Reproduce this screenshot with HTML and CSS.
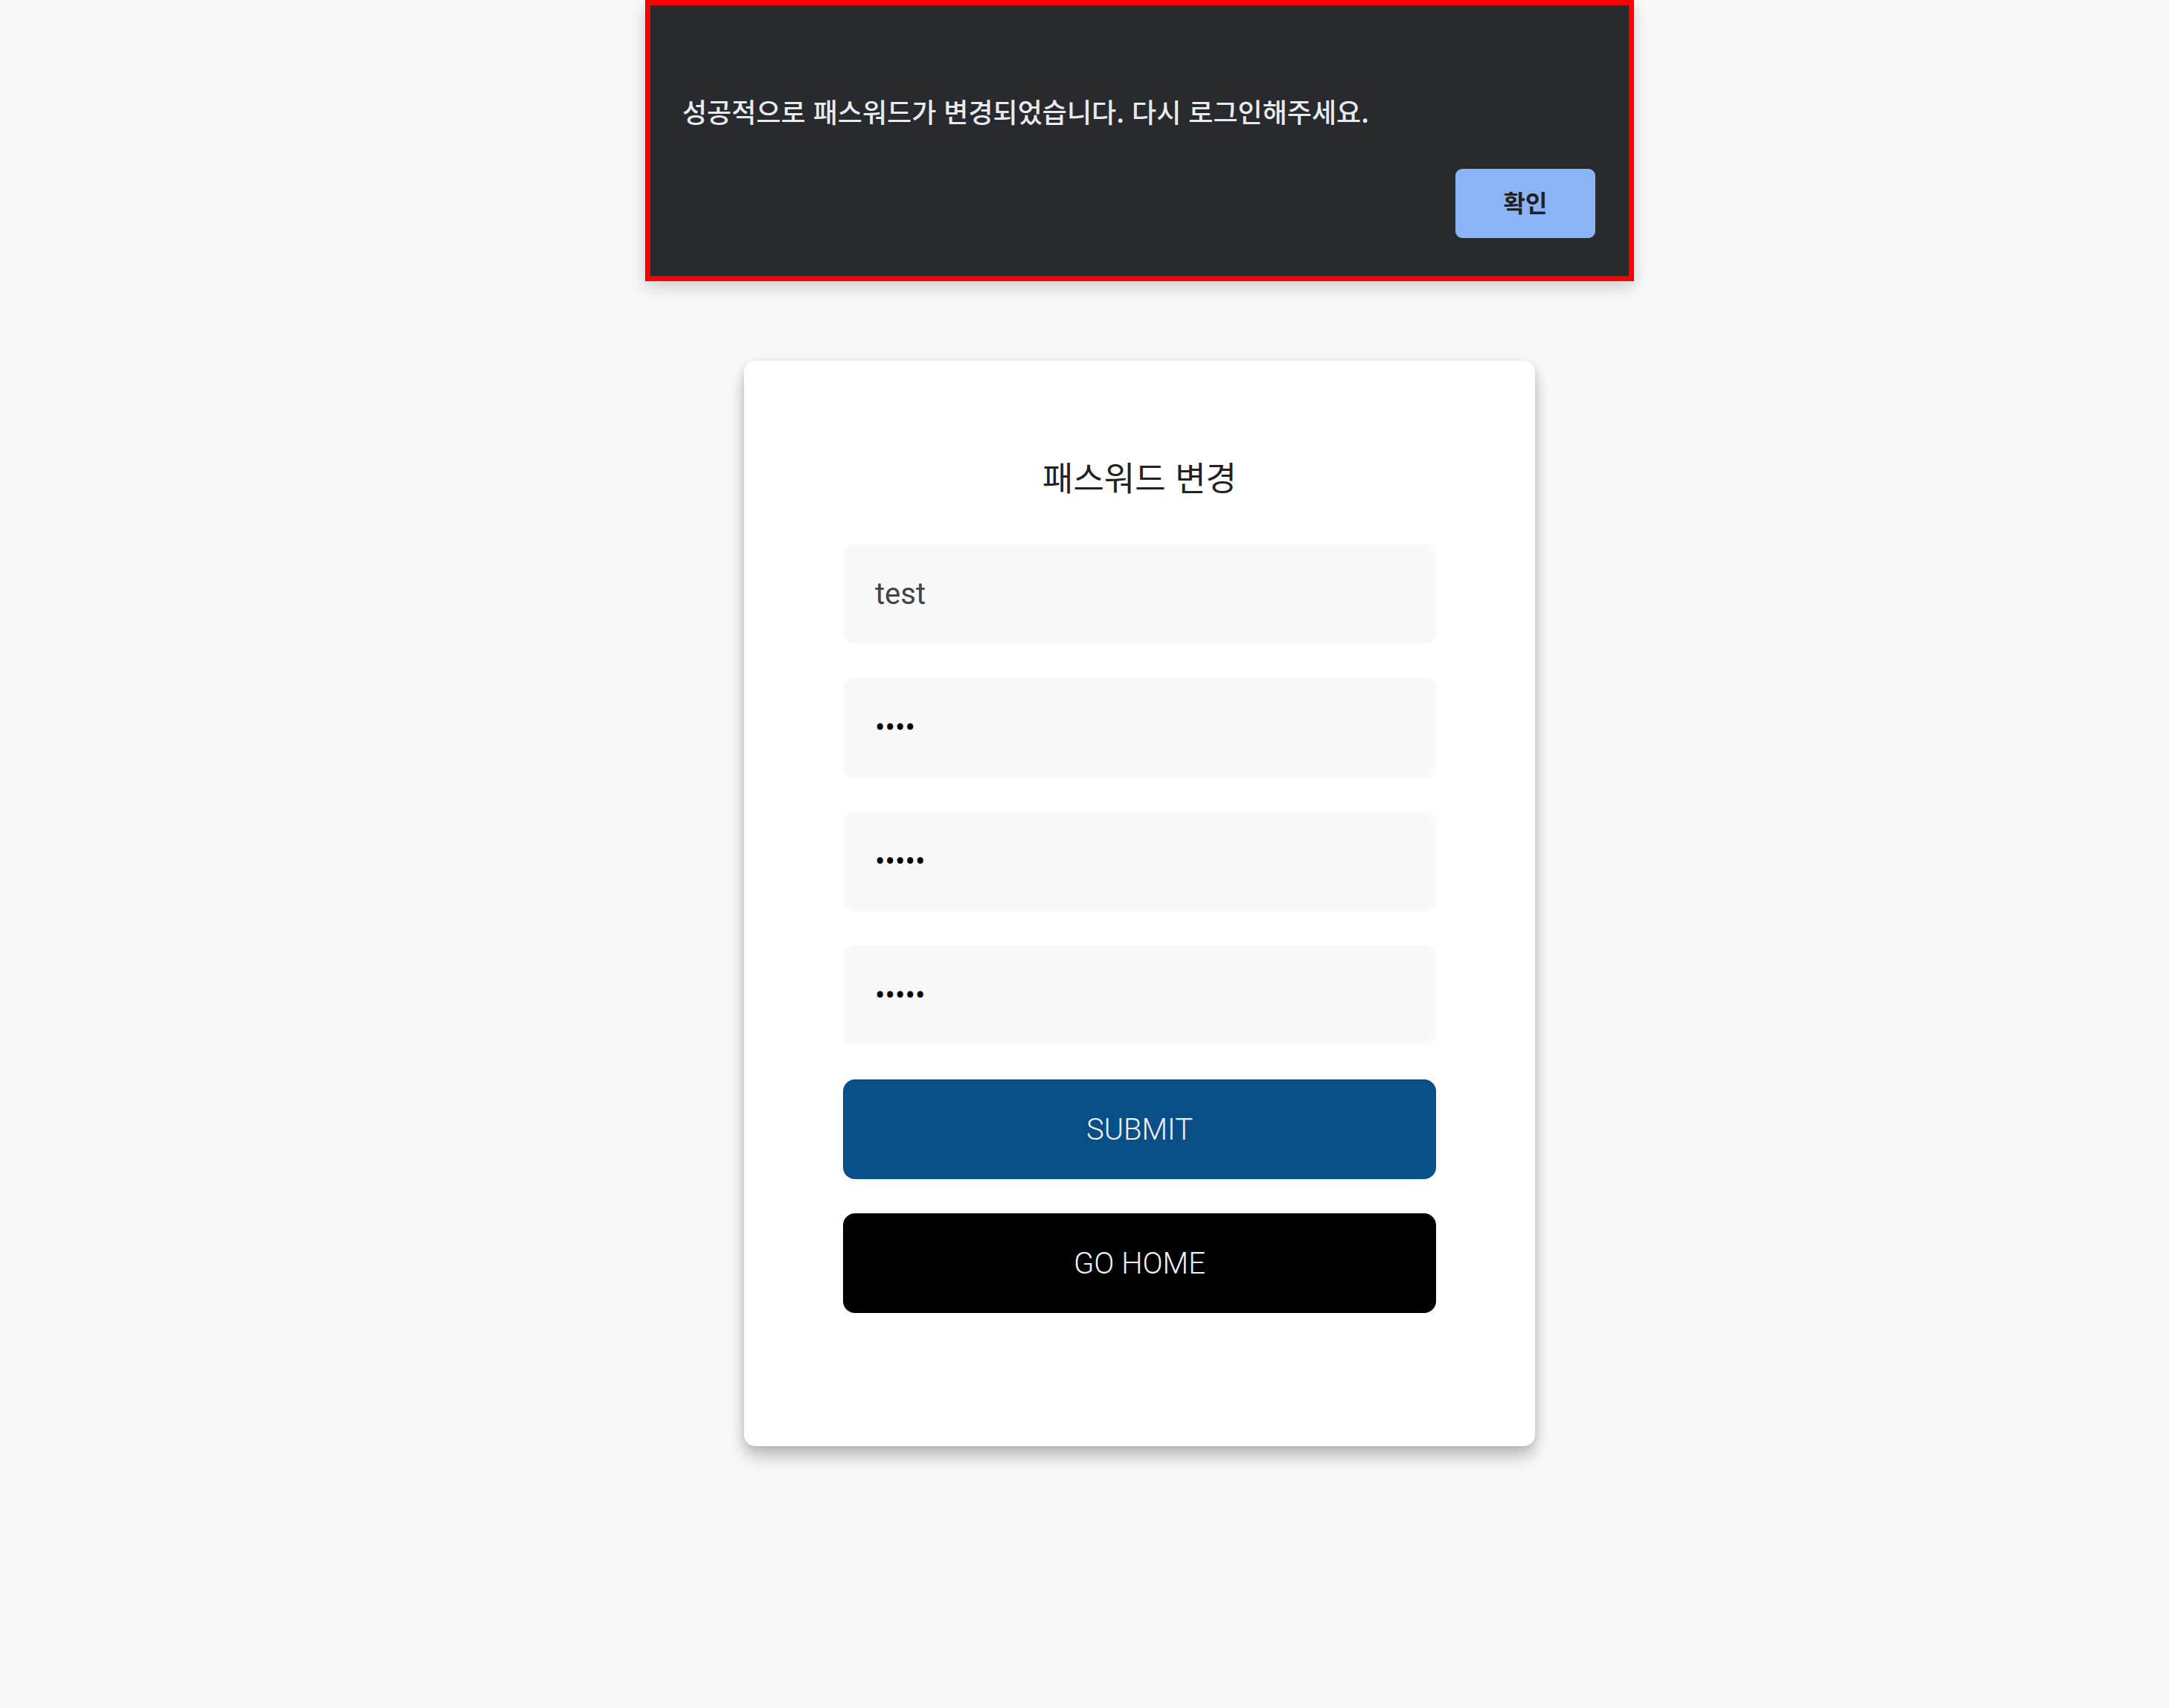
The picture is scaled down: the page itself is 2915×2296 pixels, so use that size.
FILE: index.html
```html
<!DOCTYPE html>
<html lang="ko">
<head>
<meta charset="utf-8">
<title>패스워드 변경</title>
<link rel="stylesheet" href="styles.css">
</head>
<body>
<div class="page">
  <div class="alert" role="alertdialog">
    <p class="alert-msg">성공적으로 패스워드가 변경되었습니다. 다시 로그인해주세요.</p>
    <div class="alert-actions">
      <button class="alert-ok" type="button">확인</button>
    </div>
  </div>

  <main class="card">
    <h1 class="card-title">패스워드 변경</h1>
    <form class="form">
      <input class="field" type="text" value="test">
      <input class="field field-secret" type="password" value="1234">
      <input class="field field-secret" type="password" value="12345">
      <input class="field field-secret" type="password" value="12345">
      <button class="btn btn-submit" type="button">SUBMIT</button>
      <button class="btn btn-home" type="button">GO HOME</button>
    </form>
  </main>
</div>
</body>
</html>
```

FILE: styles.css
```css
html, body {
  margin: 0;
  padding: 0;
}

body {
  background: #f9f9f9;
  width: 2915px;
  height: 2296px;
  overflow: hidden;
  font-family: Roboto, "Noto Sans CJK KR", sans-serif;
}

.page {
  position: relative;
  padding-left: 148px;
  display: flex;
  flex-direction: column;
  align-items: center;
}

/* Alert dialog overlay */
.alert {
  position: absolute;
  top: 0;
  left: 867px;
  width: 1315px;
  box-sizing: content-box;
  border: 7px solid #ff0000;
  background: #292a2d;
  padding: 0;
  box-shadow: 0 8px 22px rgba(0, 0, 0, 0.18);
  z-index: 10;
}

.alert-msg {
  margin: 0;
  padding: 121px 43px 0 43px;
  font-family: "Noto Sans CJK KR", sans-serif;
  font-weight: 500;
  font-size: 36px;
  line-height: 42px;
  color: #e8eaed;
}

.alert-actions {
  display: flex;
  justify-content: flex-end;
  padding: 57px 45px 51px 0;
}

.alert-ok {
  width: 188px;
  height: 93px;
  border: none;
  border-radius: 9px;
  background: #8ab4f8;
  color: #202124;
  font-family: "Noto Sans CJK KR", sans-serif;
  font-weight: 700;
  font-size: 32px;
  line-height: 1;
  padding: 0 0 6px 0;
}

/* Card */
.card {
  margin-top: 485px;
  width: 1063px;
  box-sizing: border-box;
  padding: 127px 133px 179px 133px;
  background: #ffffff;
  border-radius: 15px;
  box-shadow: 0 14px 22px rgba(0, 0, 0, 0.24), 0 2px 12px rgba(0, 0, 0, 0.1);
}

.card-title {
  margin: 0;
  text-align: center;
  font-family: "Noto Sans CJK KR", sans-serif;
  font-weight: 400;
  font-size: 45px;
  line-height: 58px;
  color: #222222;
}

.form {
  margin-top: 61px;
  display: flex;
  flex-direction: column;
  gap: 46px;
}

.field {
  display: block;
  height: 134px;
  box-sizing: border-box;
  border: none;
  border-radius: 14px;
  background: #f9f9f9;
  padding: 0 43px;
  font-family: Roboto, sans-serif;
  font-size: 40px;
  color: #444444;
  outline: none;
}

.field-secret {
  color: #000000;
}

.btn {
  height: 134px;
  border: none;
  border-radius: 16px;
  font-family: Roboto, sans-serif;
  font-weight: 300;
  font-size: 40px;
  color: #f2f2f2;
  padding: 0;
}

.btn-submit {
  background: #084f88;
}

.btn-home {
  background: #000000;
}
```
